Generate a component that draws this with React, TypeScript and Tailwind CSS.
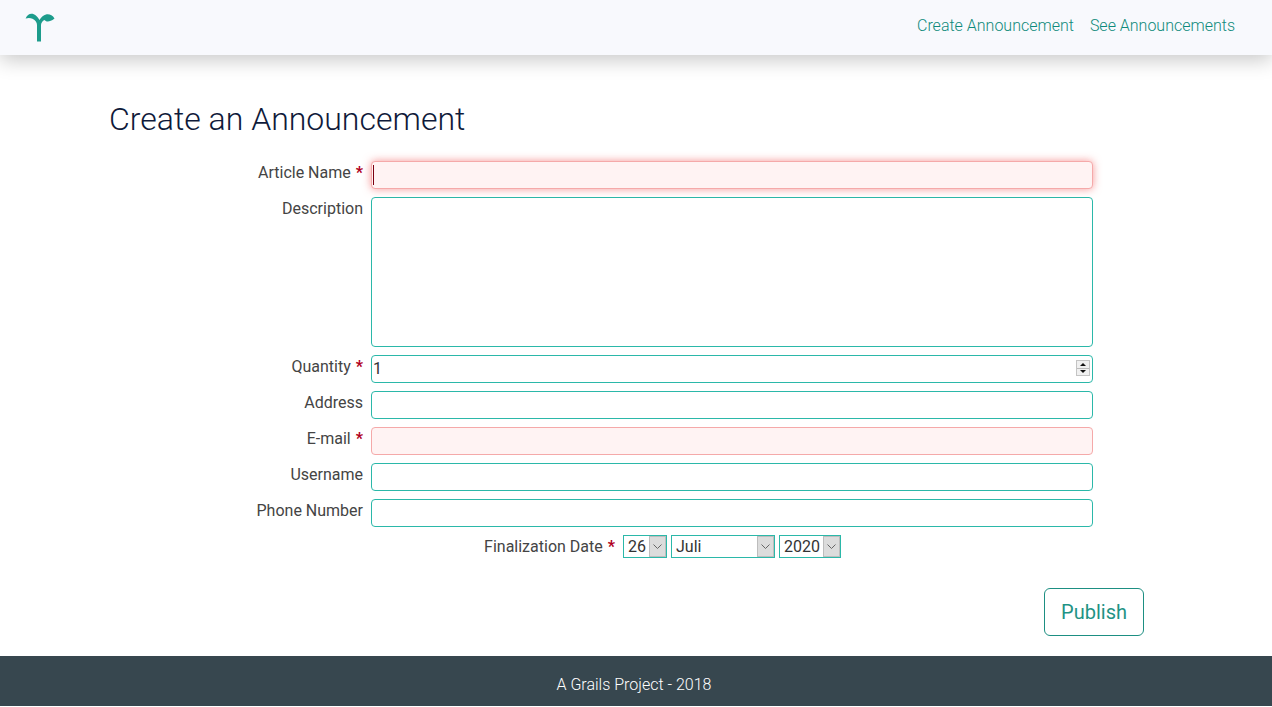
import type { ReactNode } from 'react';

const inputClass = 'block w-full rounded border border-[#2bb8a9] bg-white px-[2px] text-[16px] text-[#333] outline-none';
const errorClass = 'block w-full rounded border border-[#f5a9a9] bg-[#fff3f3] px-[2px] text-[16px] text-[#333] outline-none';

const Star = () => <span className="ml-[5px] font-bold text-[#b00020]">*</span>;

type RowProps = {
  label: string;
  required?: boolean;
  children: ReactNode;
};

const Row = ({ label, required, children }: RowProps) => (
  <div className="flex items-start gap-2">
    <label className="w-[254px] pt-[1px] text-right text-[16px] leading-[22px] text-[#444]">
      {label}
      {required ? <Star /> : null}
    </label>
    <div className="w-[722px]">{children}</div>
  </div>
);

const Chevron = () => (
  <svg width="11" height="7" viewBox="0 0 11 7" fill="none" stroke="#666" strokeWidth="1">
    <path d="M1.500 1.500l4 4 4-4" />
  </svg>
);

const DateSelect = ({ value, width }: { value: string; width: string }) => (
  <div className={`flex h-[23px] items-stretch border border-[#2bb8a9] bg-white ${width}`}>
    <span className="flex-1 pl-[4px] text-[16px] leading-[21px] text-[#333]">{value}</span>
    <span className="flex w-[17px] items-center justify-center border border-[#bdbdbd] bg-[#dcdcdc]">
      <Chevron />
    </span>
  </div>
);

const Logo = () => (
  <svg width="30" height="30" viewBox="0 0 30 30" fill="#1d9c8c">
    <path d="M12 28.500H16V12C16.300 9.500 17.500 8 19.500 7C21 9 24.500 9.500 29.500 5.500C27.500 2 24 .8 21 1.500C18.500 2.200 15.800 4.500 14.500 7C12.500 3.500 9.500 .8 6.500 .8C4 .8 1.800 2.500 .6 5.500C3 4.800 5.500 4.800 7.500 5.800C10.500 7.300 12 9.500 12 12Z" />
  </svg>
);

export default function App() {
  return (
    <div className="flex min-h-[707px] flex-col bg-white font-['Roboto',sans-serif]">
      <header className="flex h-[55px] items-center justify-between bg-[#f8f9fd] pl-[25px] pr-[37px] shadow-[0_5px_20px_rgba(0,0,0,0.22)]">
        <Logo />
        <nav className="-mt-[3px] flex gap-4 text-[16px] font-light text-[#0f8a7b]">
          <a>Create Announcement</a>
          <a>See Announcements</a>
        </nav>
      </header>

      <main className="flex-1 pl-[109px] pr-[128px]">
        <h1 className="mt-[45px] text-[32px] font-light leading-[38px] text-[#0f1a3a]">Create an Announcement</h1>

        <form className="mt-[23px] flex flex-col gap-2">
          <Row label="Article Name" required>
            <div className="relative">
              <input className={`${errorClass} h-[28px] shadow-[0_0_8px_rgba(240,80,80,0.6)]`} />
              <span className="absolute left-[2px] top-[4px] h-[20px] w-px bg-[#7a0010]" />
            </div>
          </Row>
          <Row label="Description">
            <textarea className={`${inputClass} h-[150px] resize-none`} />
          </Row>
          <Row label="Quantity" required>
            <div className="relative">
              <input className={`${inputClass} h-[28px] pb-[2px] pl-[1px]`} defaultValue="1" />
              <div className="absolute right-[3px] top-[5px] flex h-[16px] w-[14px] flex-col border border-[#c4c4c4] bg-[#f0f0f0]">
                <span className="flex flex-1 items-center justify-center border-b border-[#bbb]">
                  <svg width="6" height="3" viewBox="0 0 6 3" fill="#111"><path d="M3 0L6 3H0z" /></svg>
                </span>
                <span className="flex flex-1 items-center justify-center">
                  <svg width="6" height="3" viewBox="0 0 6 3" fill="#111"><path d="M0 0h6L3 3z" /></svg>
                </span>
              </div>
            </div>
          </Row>
          <Row label="Address">
            <input className={`${inputClass} h-[28px]`} />
          </Row>
          <Row label="E-mail" required>
            <input className={`${errorClass} h-[28px]`} />
          </Row>
          <Row label="Username">
            <input className={`${inputClass} h-[28px]`} />
          </Row>
          <Row label="Phone Number">
            <input className={`${inputClass} h-[28px]`} />
          </Row>
          <div className="flex items-start">
            <label className="w-[506px] pt-[1px] text-right text-[16px] leading-[22px] text-[#444]">
              Finalization Date
              <Star />
            </label>
            <div className="ml-2 flex gap-1">
              <DateSelect value="26" width="w-[44px]" />
              <DateSelect value="Juli" width="w-[104px]" />
              <DateSelect value="2020" width="w-[62px]" />
            </div>
          </div>
        </form>

        <div className="mt-[30px] flex justify-end">
          <button
            type="button"
            className="h-[48px] w-[100px] rounded-md border border-[#1d8f82] bg-white text-[20px] text-[#1f9385]"
          >
            Publish
          </button>
        </div>
      </main>

      <footer className="mb-[1px] mt-[20px] flex h-[50px] items-center justify-center bg-[#37474f] pr-[4px] pt-[7px] text-[16px] font-light text-white">
        A Grails Project - 2018
      </footer>
    </div>
  );
}
